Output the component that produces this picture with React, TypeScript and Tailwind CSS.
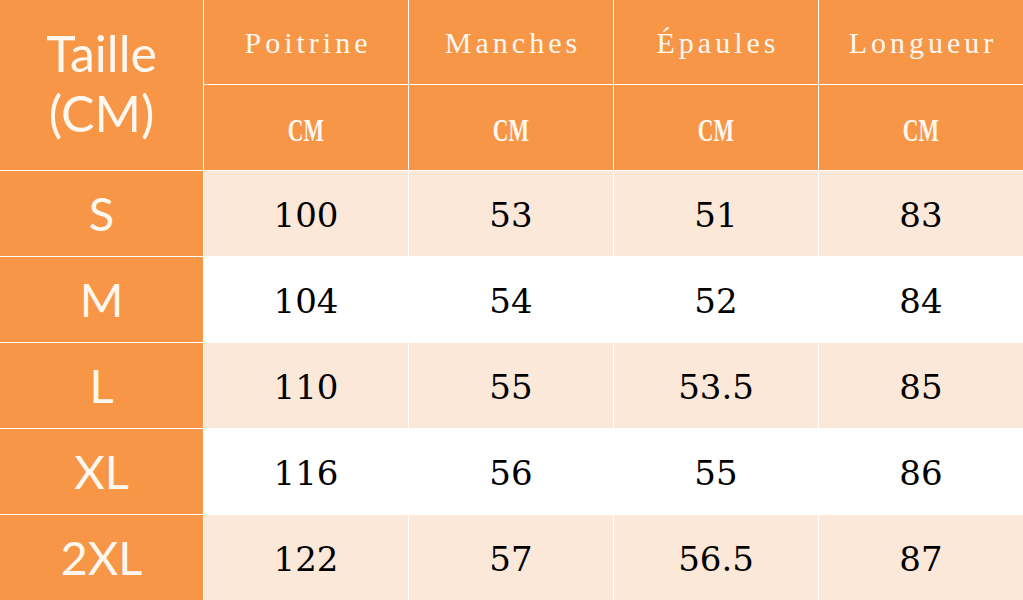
import { type FC } from "react";

const columns = ["Poitrine", "Manches", "Épaules", "Longueur"];

const rows = [
  { size: "S", values: ["100", "53", "51", "83"] },
  { size: "M", values: ["104", "54", "52", "84"] },
  { size: "L", values: ["110", "55", "53.5", "85"] },
  { size: "XL", values: ["116", "56", "55", "86"] },
  { size: "2XL", values: ["122", "57", "56.5", "87"] },
];

const App: FC = () => {
  return (
    <div className="w-[1023px] h-[600px] overflow-hidden bg-white">
      <div className="grid h-full w-full grid-cols-[203px_204px_204px_204px_1fr] grid-rows-[84px_85px_85px_85px_85px_85px_1fr] gap-px bg-white">
        {/* size label spans both header rows */}
        <div className="row-span-2 flex flex-col items-center justify-center bg-[#f79646] pb-1 font-['Lato',sans-serif] text-[50px] leading-[60px] text-[#fff8f0]">
          <span>Taille</span>
          <span>(CM)</span>
        </div>
        {columns.map((c) => (
          <div
            key={c}
            className="flex items-center justify-center bg-[#f79646] pl-1 font-['Liberation_Serif',serif] text-[30px] tracking-[4px] text-[#fff8f0]"
          >
            {c}
          </div>
        ))}
        {columns.map((c) => (
          <div
            key={c + "-cm"}
            className="flex items-center justify-center bg-[#f79646] pt-2 font-['Liberation_Serif',serif] text-[31px] font-bold text-[#fff8f0]"
          >
            <span className="inline-block scale-x-[0.7]">CM</span>
          </div>
        ))}
        {rows.map((r, i) => (
          <>
            <div
              key={r.size}
              className="flex items-center justify-center bg-[#f79646] font-['Lato',sans-serif] text-[47px] text-[#fff8f0]"
            >
              {r.size}
            </div>
            {r.values.map((v, j) => (
              <div
                key={r.size + j}
                className={
                  "flex items-center justify-center pt-1 font-['DejaVu_Serif',serif] text-[34px] text-black " +
                  (i % 2 === 0 ? "bg-[#fce8d9]" : "bg-white")
                }
              >
                {v}
              </div>
            ))}
          </>
        ))}
      </div>
    </div>
  );
};

export default App;
